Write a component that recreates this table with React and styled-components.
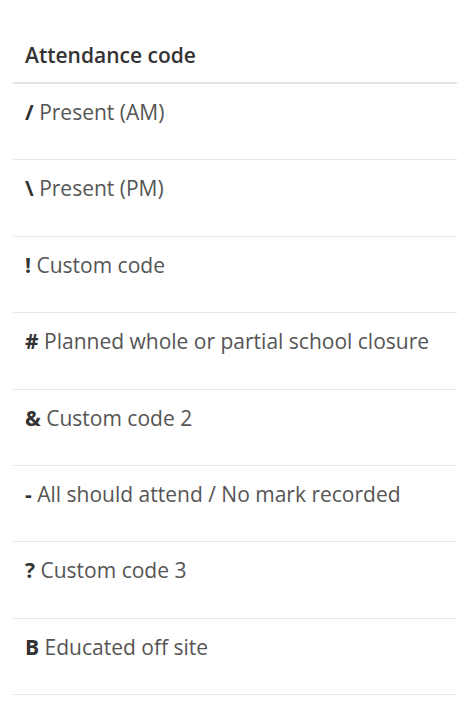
import React from "react";
import styled, { createGlobalStyle } from "styled-components";

const Global = createGlobalStyle`
  html, body { margin: 0; padding: 0; background: #fff; }
  body { font-family: "Open Sans", "Liberation Sans", sans-serif; }
`;

const Page = styled.div`
  padding: 41px 0 0 13px;
  box-sizing: border-box;
  width: 457px;
`;

const Table = styled.div`
  display: flex;
  flex-direction: column;
  width: 444px;
`;

const HeaderCell = styled.div`
  padding: 0 12px 13px;
  font-size: 21px;
  font-weight: 600;
  line-height: 28px;
  color: #333;
  border-bottom: 2px solid #e3e3e3;
`;

const Row = styled.div`
  box-sizing: border-box;
  height: 76.4px;
  padding: 14px 12px 0;
  font-size: 21px;
  line-height: 28px;
  color: #555;
  white-space: nowrap;
  border-bottom: 1px solid #e6e6e6;
`;

const Code = styled.strong`
  font-weight: 700;
  color: #333;
`;

const rows = [
  ["/", "Present (AM)"],
  ["\\", "Present (PM)"],
  ["!", "Custom code"],
  ["#", "Planned whole or partial school closure"],
  ["&", "Custom code 2"],
  ["-", "All should attend / No mark recorded"],
  ["?", "Custom code 3"],
  ["B", "Educated off site"],
];

export default function App() {
  return (
    <Page>
      <Global />
      <Table>
        <HeaderCell>Attendance code</HeaderCell>
        {rows.map(([c, label]) => (
          <Row key={c}>
            <Code>{c}</Code> {label}
          </Row>
        ))}
      </Table>
    </Page>
  );
}
